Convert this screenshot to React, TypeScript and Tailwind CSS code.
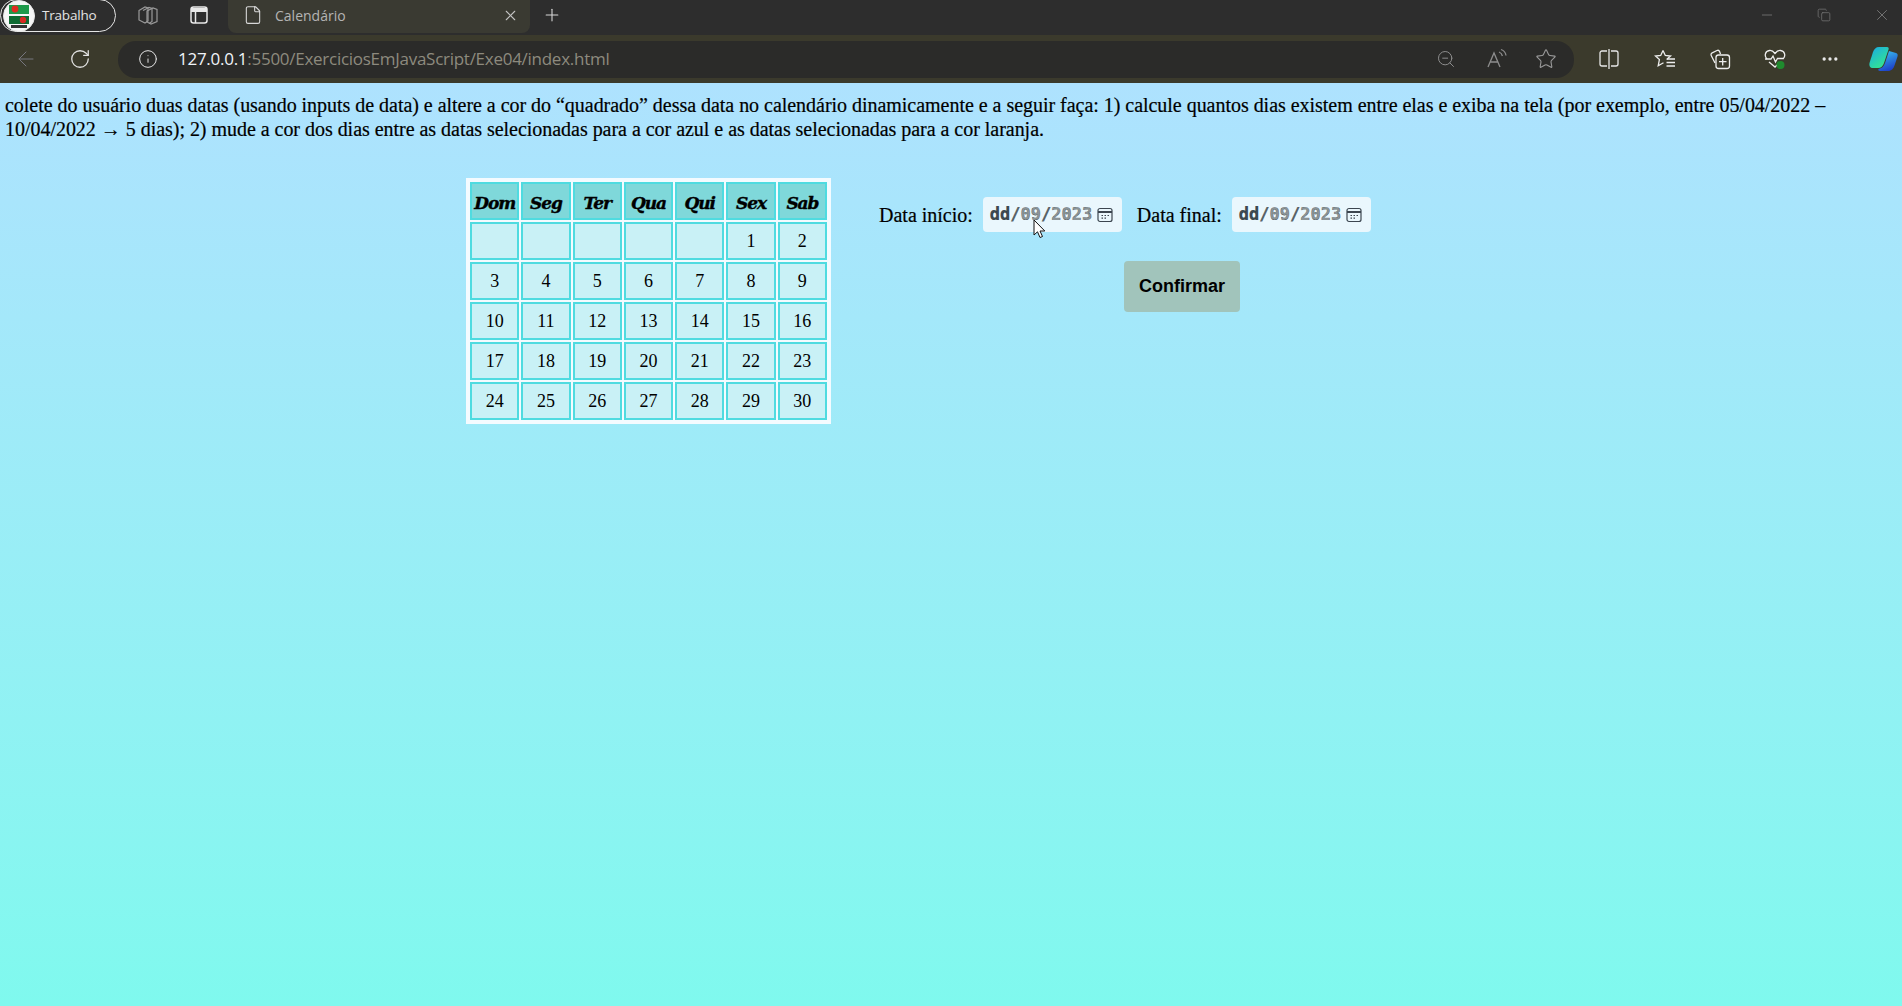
import { ArrowLeft, RotateCw, Info, ZoomOut, Star, X, Plus, Minus, MoreHorizontal, File, Copy } from 'lucide-react';

const rows: (number | null)[][] = [
  [null, null, null, null, null, 1, 2],
  [3, 4, 5, 6, 7, 8, 9],
  [10, 11, 12, 13, 14, 15, 16],
  [17, 18, 19, 20, 21, 22, 23],
  [24, 25, 26, 27, 28, 29, 30],
];
const days = ['Dom', 'Seg', 'Ter', 'Qua', 'Qui', 'Sex', 'Sab'];

function LogoIf() {
  return (
    <svg width="32" height="32" viewBox="0 0 32 32" className="shrink-0">
      <circle cx="16" cy="16" r="15.500" fill="#f6f6f6" stroke="#e8e8e8" />
      <rect x="6" y="5" width="20" height="9" fill="#1e9a4a" />
      <circle cx="12" cy="9" r="3.400" fill="#e02b20" />
      <rect x="6" y="16" width="20" height="8" fill="#0f6a32" />
      <circle cx="20" cy="20" r="3.200" fill="#d82a22" />
      <rect x="8" y="25" width="16" height="3" fill="#333" />
    </svg>
  );
}

function TabsIcon() {
  return (
    <svg width="22" height="22" viewBox="0 0 22 22" fill="none" stroke="#9a9a9a" strokeWidth="1.2">
      <path d="M2 6.500 8 3l3 1v13l-3 2-6-3z" />
      <path d="M6 6.500 12 3.500l3 1v13l-3 2" />
      <path d="M10 7l6-3 4 1.500v12L14 20l-4-2z" />
    </svg>
  );
}

function VerticalTabIcon() {
  return (
    <svg width="20" height="20" viewBox="0 0 20 20" fill="none" stroke="#e8e8e8" strokeWidth="1.5">
      <rect x="2" y="2" width="16" height="16" rx="2.500" />
      <path d="M2 5h16" strokeWidth="4" />
      <path d="M6.500 7v11" />
    </svg>
  );
}

function ReadAloudIcon() {
  return (
    <svg width="22" height="22" viewBox="0 0 22 22" fill="none" stroke="#8d8d8d" strokeWidth="1.3">
      <path d="M2 19 8 5l6 14M4.500 14h7" />
      <path d="M13 4c2 .7 3 2 3.400 4M15 1.500c3 1 4.600 3.200 5 6" />
    </svg>
  );
}

function SplitIcon() {
  return (
    <svg width="22" height="22" viewBox="0 0 22 22" fill="none" stroke="#e6e6e6" strokeWidth="1.3">
      <path d="M9 3H4a2 2 0 0 0-2 2v11a2 2 0 0 0 2 2h5M13 3h5a2 2 0 0 1 2 2v11a2 2 0 0 1-2 2h-5M11 1v20" />
    </svg>
  );
}

function FavoritesIcon() {
  return (
    <svg width="22" height="22" viewBox="0 0 22 22" fill="none" stroke="#eeeeee" strokeWidth="1.3">
      <path d="M9 2.500 11.300 7.500l5.200.5-3.900 3.400M9 2.500 6.700 7.500 1.500 8l3.900 3.600-1.200 6.200 5.300-3" />
      <path d="M13 11h8M12.500 14.500h8.500M12.500 18h8.500" />
    </svg>
  );
}

function CollectionsIcon() {
  return (
    <svg width="22" height="22" viewBox="0 0 22 22" fill="none" stroke="#eeeeee" strokeWidth="1.3">
      <path d="M6 15 2.200 7.500a2 2 0 0 1 1-2.700L8 2.500a2 2 0 0 1 2.600 1L11.500 6" />
      <rect x="7" y="7" width="13.500" height="13.500" rx="2.500" />
      <path d="M13.700 10v7.500M10 13.700h7.500" />
    </svg>
  );
}

function HealthIcon() {
  return (
    <svg width="24" height="24" viewBox="0 0 24 24" fill="none">
      <path
        d="M4 12C1 9 2 4 6.500 3.500c2.500-.3 4 1 5.500 3 1.500-2 3-3.300 5.500-3C22 4 23 9 20 12M6 15l6 5 2-2"
        stroke="#eeeeee"
        strokeWidth="1.3"
      />
      <path d="M2 12h6l2-3 2.500 6 2-3.500H20" stroke="#eeeeee" strokeWidth="1.3" />
      <circle cx="17.500" cy="18" r="4" fill="#1f8a2e" />
    </svg>
  );
}

function CopilotIcon() {
  return (
    <svg width="30" height="30" viewBox="0 0 30 30">
      <defs>
        <linearGradient id="cop1" x1="0" y1="0" x2="0.7" y2="1">
          <stop offset="0" stopColor="#18a8e8" />
          <stop offset="1" stopColor="#35e88c" />
        </linearGradient>
        <linearGradient id="cop2" x1="0.2" y1="0" x2="0.6" y2="1">
          <stop offset="0" stopColor="#38c0f0" />
          <stop offset="1" stopColor="#1d3cc8" />
        </linearGradient>
      </defs>
      <path d="M11 3h8c1.500 0 2 1 1.500 2.500L16 19c-1 3-3 5-6 5H5c-3 0-4-2-3.500-5L5 8c1-3 3-5 6-5z" fill="url(#cop1)" />
      <path d="M21 7l7 2c1.500.5 2 1.500 1.500 3.500l-3 9c-1 3-3 5.500-6.500 5.500h-8c-1.500 0-2-1-1.500-2 3-.5 5.500-2.500 6.500-6z" fill="url(#cop2)" />
    </svg>
  );
}

function CalendarIcon() {
  return (
    <svg width="16" height="16" viewBox="0 0 16 16" fill="none" stroke="#3c4650" strokeWidth="1.2">
      <rect x="1" y="1.500" width="14" height="13" rx="2" />
      <path d="M1 5h14" strokeWidth="2" />
      <path d="M4.500 8.500h1.500M7.500 8.500h1.500M10.500 8.500h1.500M4.500 11.200h1.500M7.500 11.200h1.500" />
    </svg>
  );
}

function Cursor() {
  return (
    <svg width="13" height="20" viewBox="0 0 13 20" className="absolute left-[50px] top-[22px]">
      <path d="M1 1v15l3.500-3.200 2.500 5.700 2.500-1-2.500-5.500h4.800z" fill="#fff" stroke="#111" strokeWidth="1" />
    </svg>
  );
}

function DateField({ cursor }: { cursor?: boolean }) {
  return (
    <div className="relative flex items-center h-[35px] w-[139px] rounded-[4px] bg-[#eaf7fd] pl-[7px] pr-[9px] text-[17px] font-bold font-['DejaVu_Sans_Mono',monospace]">
      <span className="text-[#3d4a52]">dd</span>
      <span className="text-[#5b666c]">/</span>
      <span className="text-[#8b9497]">09</span>
      <span className="text-[#5b666c]">/</span>
      <span className="text-[#8b9497]">2023</span>
      <span className="ml-auto"><CalendarIcon /></span>
      {cursor && <Cursor />}
    </div>
  );
}

export default function App() {
  return (
    <div className="w-[1902px] h-[1006px] overflow-hidden flex flex-col font-['Liberation_Serif',serif]">
      {/* barra de abas */}
      <div className="h-[35px] bg-[#2d2d2d] flex items-start font-['Open_Sans',sans-serif] shrink-0">
        <div className="flex items-center h-[33px] w-[116px] -mt-px border border-[#e6e6e6] rounded-[17px] pl-[2px] gap-[7px]">
          <LogoIf />
          <span className="text-[13.5px] tracking-[-0.2px] text-[#e4e4e4]">Trabalho</span>
        </div>
        <div className="ml-[21px] mt-[4px] w-[22px]"><TabsIcon /></div>
        <div className="ml-[30px] mt-[5px] w-[20px]"><VerticalTabIcon /></div>
        <div className="ml-[19px] flex items-center h-[33px] w-[302px] bg-[#3a3a32] pb-[3px] pl-[15px] pr-[11px] rounded-b-[8px]">
          <File size={20} strokeWidth={1.3} className="text-[#d8d8d8]" />
          <span className="ml-[12px] text-[14px] text-[#b4b4b4]">Calendário</span>
          <X size={17} strokeWidth={1.5} className="ml-auto text-[#c4c4c4]" />
        </div>
        <Plus size={20} strokeWidth={1.3} className="ml-[12px] mt-[5px] text-[#d8d8d8]" />
        <div className="ml-auto h-[30px] flex items-center gap-[42px] pr-[11px] text-[#7a7a7a]">
          <Minus size={16} strokeWidth={1.2} />
          <Copy size={14} strokeWidth={1.2} />
          <X size={18} strokeWidth={1.2} />
        </div>
      </div>

      {/* barra de endereco */}
      <div className="h-[48px] bg-[#3b3a2c] flex items-center shrink-0">
        <ArrowLeft size={24} strokeWidth={1} className="ml-[14px] text-[#77777f]" />
        <RotateCw size={22} strokeWidth={1.4} className="ml-[31px] text-[#e2e2e2]" />
        <div className="ml-[27px] w-[1456px] h-[37px] rounded-[18px] bg-[#2b2b29] flex items-center pl-[20px] pr-[17px] font-['Open_Sans',sans-serif]">
          <Info size={20} strokeWidth={1.2} className="text-[#e4e4e4]" />
          <span className="ml-[20px] text-[17px] tracking-[-0.27px] text-[#f0f4f8]">127.0.0.1</span>
          <span className="text-[17px] tracking-[-0.27px] text-[#8d8a7e]">:5500/ExerciciosEmJavaScript/Exe04/index.html</span>
          <ZoomOut size={20} strokeWidth={1.2} className="ml-auto text-[#8d8d8d]" />
          <span className="ml-[30px]"><ReadAloudIcon /></span>
          <Star size={22} strokeWidth={1.2} className="ml-[27px] text-[#9a9a9a]" />
        </div>
        <span className="ml-[24px]"><SplitIcon /></span>
        <span className="ml-[34px]"><FavoritesIcon /></span>
        <span className="ml-[33px]"><CollectionsIcon /></span>
        <span className="ml-[32px]"><HealthIcon /></span>
        <MoreHorizontal size={20} className="ml-[33px] text-[#e8e8e8]" />
        <span className="ml-[28px]"><CopilotIcon /></span>
      </div>

      {/* pagina */}
      <div className="flex-1 bg-gradient-to-b from-[#aee2fe] to-[#7ff9ee] text-black">
        <p className="px-[5px] pt-[10px] text-[20px] leading-[24px] tracking-[-0.03px] [-webkit-text-stroke:0.2px_black]">
          colete do usuário duas datas (usando inputs de data) e altere a cor do “quadrado” dessa data no calendário dinamicamente e a seguir faça: 1) calcule quantos dias existem entre elas e exiba na tela (por exemplo, entre 05/04/2022 – 10/04/2022 → 5 dias); 2) mude a cor dos dias entre as datas selecionadas para a cor azul e as datas selecionadas para a cor laranja.
        </p>

        <div className="flex items-start pl-[466px] pt-[37px]">
          <table className="w-[365px] table-fixed border-separate border-spacing-[2px] border-2 border-[#f4fbff] bg-[#f4fbff]">
            <thead>
              <tr>
                {days.map((d) => (
                  <th key={d} className="h-[38px] border-2 border-[#4fdbe0] bg-[#7fd8da] pt-[5px] text-[17px] font-bold italic font-['DejaVu_Serif',serif] tracking-[-1.1px] [-webkit-text-stroke:0.4px_black]">
                    {d}
                  </th>
                ))}
              </tr>
            </thead>
            <tbody>
              {rows.map((r, i) => (
                <tr key={i}>
                  {r.map((n, j) => (
                    <td key={j} className="h-[38px] border-2 border-[#4fdbe0] bg-[#c9f1f6] text-center text-[18px] p-0">
                      {n}
                    </td>
                  ))}
                </tr>
              ))}
            </tbody>
          </table>

          <div className="ml-[48px] flex flex-col items-start pt-[19px]">
            <div className="flex items-center text-[20px] [-webkit-text-stroke:0.2px_black]">
              <span>Data início:</span>
              <span className="ml-[10px]"><DateField cursor /></span>
              <span className="ml-[15px]">Data final:</span>
              <span className="ml-[10px]"><DateField /></span>
            </div>
            <button className="ml-[245px] mt-[29px] w-[116px] h-[51px] rounded-[4px] bg-[#a1c4bb] text-[18px] font-bold text-black font-['Liberation_Sans',sans-serif]">
              Confirmar
            </button>
          </div>
        </div>
      </div>
    </div>
  );
}
